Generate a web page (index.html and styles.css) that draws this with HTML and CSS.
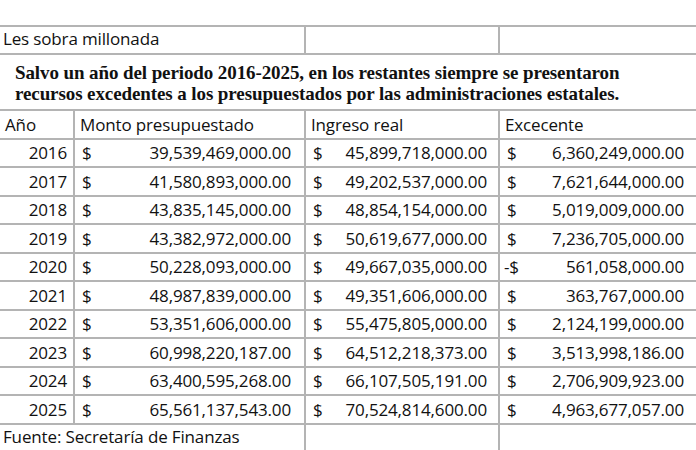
FILE: index.html
```html
<!DOCTYPE html>
<html lang="es">
<head>
<meta charset="utf-8">
<link rel="stylesheet" href="styles.css">
</head>
<body>
<div class="sheet">
  <div class="cell span2 title">Les sobra millonada</div>
  <div class="cell vl"></div>
  <div class="cell vl"></div>

  <div class="cell span4 lead">Salvo un año del periodo 2016-2025, en los restantes siempre se presentaron recursos excedentes a los presupuestados por las administraciones estatales.</div>

  <div class="cell head">Año</div>
  <div class="cell vl head">Monto presupuestado</div>
  <div class="cell vl head">Ingreso real</div>
  <div class="cell vl head">Excecente</div>

  <div class="cell year">2016</div>
  <div class="cell vl money m1"><span>$</span><span>39,539,469,000.00</span></div>
  <div class="cell vl money m2"><span>$</span><span>45,899,718,000.00</span></div>
  <div class="cell vl money m3"><span>$</span><span>6,360,249,000.00</span></div>

  <div class="cell year">2017</div>
  <div class="cell vl money m1"><span>$</span><span>41,580,893,000.00</span></div>
  <div class="cell vl money m2"><span>$</span><span>49,202,537,000.00</span></div>
  <div class="cell vl money m3"><span>$</span><span>7,621,644,000.00</span></div>

  <div class="cell year">2018</div>
  <div class="cell vl money m1"><span>$</span><span>43,835,145,000.00</span></div>
  <div class="cell vl money m2"><span>$</span><span>48,854,154,000.00</span></div>
  <div class="cell vl money m3"><span>$</span><span>5,019,009,000.00</span></div>

  <div class="cell year">2019</div>
  <div class="cell vl money m1"><span>$</span><span>43,382,972,000.00</span></div>
  <div class="cell vl money m2"><span>$</span><span>50,619,677,000.00</span></div>
  <div class="cell vl money m3"><span>$</span><span>7,236,705,000.00</span></div>

  <div class="cell year">2020</div>
  <div class="cell vl money m1"><span>$</span><span>50,228,093,000.00</span></div>
  <div class="cell vl money m2"><span>$</span><span>49,667,035,000.00</span></div>
  <div class="cell vl money m3 neg"><span>-$</span><span>561,058,000.00</span></div>

  <div class="cell year">2021</div>
  <div class="cell vl money m1"><span>$</span><span>48,987,839,000.00</span></div>
  <div class="cell vl money m2"><span>$</span><span>49,351,606,000.00</span></div>
  <div class="cell vl money m3"><span>$</span><span>363,767,000.00</span></div>

  <div class="cell year">2022</div>
  <div class="cell vl money m1"><span>$</span><span>53,351,606,000.00</span></div>
  <div class="cell vl money m2"><span>$</span><span>55,475,805,000.00</span></div>
  <div class="cell vl money m3"><span>$</span><span>2,124,199,000.00</span></div>

  <div class="cell year">2023</div>
  <div class="cell vl money m1"><span>$</span><span>60,998,220,187.00</span></div>
  <div class="cell vl money m2"><span>$</span><span>64,512,218,373.00</span></div>
  <div class="cell vl money m3"><span>$</span><span>3,513,998,186.00</span></div>

  <div class="cell year">2024</div>
  <div class="cell vl money m1"><span>$</span><span>63,400,595,268.00</span></div>
  <div class="cell vl money m2"><span>$</span><span>66,107,505,191.00</span></div>
  <div class="cell vl money m3"><span>$</span><span>2,706,909,923.00</span></div>

  <div class="cell year">2025</div>
  <div class="cell vl money m1"><span>$</span><span>65,561,137,543.00</span></div>
  <div class="cell vl money m2"><span>$</span><span>70,524,814,600.00</span></div>
  <div class="cell vl money m3"><span>$</span><span>4,963,677,057.00</span></div>

  <div class="cell span2 foot">Fuente: Secretaría de Finanzas</div>
  <div class="cell vl"></div>
  <div class="cell vl"></div>
</div>
</body>
</html>
```

FILE: styles.css
```css
html, body {
  margin: 0;
  padding: 0;
  background: #ffffff;
}

body {
  font-family: "Open Sans", "Liberation Sans", sans-serif;
  font-size: 17px;
  letter-spacing: -0.15px;
  color: #111111;
  overflow: hidden;
  height: 450px;
}

.sheet {
  margin-top: 25px;
  display: grid;
  grid-template-columns: 73px 231px 194px 198px;
  grid-template-rows: 28px 56px repeat(12, 28.5px);
}

.cell {
  border-top: 2px solid #b4b4b4;
  display: flex;
  align-items: center;
  white-space: nowrap;
  overflow: hidden;
}

.vl {
  border-left: 2px solid #b4b4b4;
}

.span2 {
  grid-column: span 2;
}

.span4 {
  grid-column: span 4;
}

.title,
.foot {
  padding-left: 3px;
  padding-bottom: 3px;
}

.lead {
  white-space: normal;
  align-items: flex-start;
  font-family: "Liberation Serif", "DejaVu Serif", serif;
  font-weight: bold;
  font-size: 19px;
  letter-spacing: -0.1px;
  line-height: 21px;
  padding: 7px 50px 0 15px;
  color: #111;
}

.head {
  padding-left: 5px;
}

.head:first-child {
  padding-left: 3px;
}

.year {
  justify-content: flex-end;
  padding-right: 6px;
}

.money {
  justify-content: space-between;
  padding-left: 7px;
}

.m1 {
  padding-right: 13px;
}

.m2 {
  padding-right: 11px;
}

.m3 {
  padding-right: 12px;
}

.neg {
  padding-left: 4px;
}
```
